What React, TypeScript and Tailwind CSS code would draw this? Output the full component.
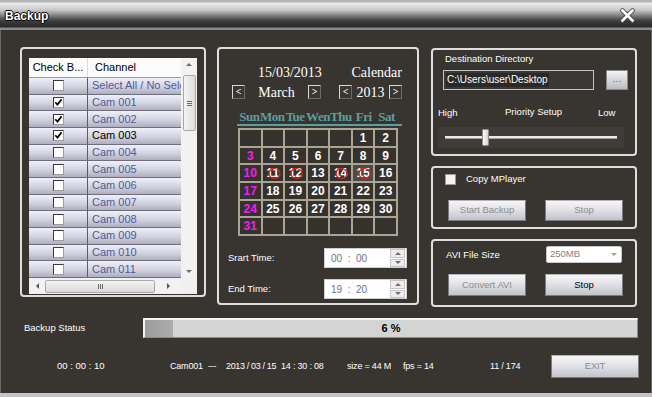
import React from "react";

const SANS = "font-['Liberation_Sans',Arial,sans-serif]";
const SERIF = "font-['Liberation_Serif','Times_New_Roman',serif]";

const channels = [
	"Select All / No Select",
	"Cam 001",
	"Cam 002",
	"Cam 003",
	"Cam 004",
	"Cam 005",
	"Cam 006",
	"Cam 007",
	"Cam 008",
	"Cam 009",
	"Cam 010",
	"Cam 011",
];
const checkedRows = [1, 2, 3];

const weeks = [
	[0, 0, 0, 0, 0, 1, 2],
	[3, 4, 5, 6, 7, 8, 9],
	[10, 11, 12, 13, 14, 15, 16],
	[17, 18, 19, 20, 21, 22, 23],
	[24, 25, 26, 27, 28, 29, 30],
	[31, 0, 0, 0, 0, 0, 0],
];
const marked = [11, 12, 14, 15];
const dayNames = ["Sun", "Mon", "Tue", "Wen", "Thu", "Fri", "Sat"];

const Check = ({ on }: { on?: boolean }) => (
	<div className="w-[11px] h-[11px] bg-white border border-[#3a3a3a] border-r-[#9c9c9c] border-b-[#9c9c9c] flex items-center justify-center">
		{on && (
			<svg width="9" height="9" viewBox="0 0 9 9">
				<path d="M1.3 4.2 L3.4 6.6 L7.6 1.4" stroke="#000" strokeWidth="1.7" fill="none" />
			</svg>
		)}
	</div>
);

const TriUp = () => (
	<div className="w-0 h-0 border-l-[3px] border-r-[3px] border-b-[3px] border-l-transparent border-r-transparent border-b-[#6e6e6e]" />
);
const TriDown = () => (
	<div className="w-0 h-0 border-l-[3px] border-r-[3px] border-t-[3px] border-l-transparent border-r-transparent border-t-[#6e6e6e]" />
);

const Btn = ({ children, w, h, dark }: { children: React.ReactNode; w: string; h: string; dark?: boolean }) => (
	<div
		className={`${w} ${h} flex items-center justify-center border border-[#7c7c80] border-t-[#b4b4b8] bg-[linear-gradient(to_bottom,#f6f6f8,#e2e2e8_45%,#c2c2ca)] text-[9.5px] ${SANS} ${
			dark ? "text-black" : "text-[#8c8c8c]"
		}`}
	>
		{children}
	</div>
);

const NavBtn = ({ dir }: { dir: string }) => (
	<div className="w-[13px] h-[14px] flex items-center justify-center border border-[#d8d8d8] border-r-[#6a6a6a] border-b-[#6a6a6a] bg-[#3a3632] text-white text-[10px] font-bold leading-none">
		{dir}
	</div>
);

const TimeBox = ({ value }: { value: string }) => (
	<div className="w-[83px] h-[20px] bg-white border border-[#cfcfcf] flex items-center">
		<span className={`ml-[6px] flex-1 text-[10px] text-[#70708c] whitespace-pre ${SANS}`}>{value}</span>
		<div className="w-[15px] h-[18px] mr-[1px] flex flex-col gap-[1px]">
			<div className="flex-1 bg-[#ededed] border border-[#c6c6c6] flex items-center justify-center">
				<TriUp />
			</div>
			<div className="flex-1 bg-[#ededed] border border-[#c6c6c6] flex items-center justify-center">
				<TriDown />
			</div>
		</div>
	</div>
);

const ChannelList = () => (
	<div className="w-[168px] h-[236px] bg-[#f0f0f0] flex flex-col ml-[7px] mt-[9px]">
		<div className="flex h-[220px]">
			<div className="w-[152px] flex flex-col">
				<div className="h-[20px] shrink-0 flex bg-[#fbfbfb] border-b border-[#9a9aa4] text-[11px] text-black">
					<div className="w-[59px] flex items-center justify-center border-r border-[#dcdcdc]">Check B...</div>
					<div className="flex-1 flex items-center pl-[7px]">Channel</div>
				</div>
				<div className="h-[200px] grid grid-rows-[repeat(12,minmax(0,1fr))]">
					{channels.map((name, i) => (
						<div
							key={name}
							className="min-h-0 overflow-hidden flex bg-[linear-gradient(to_bottom,#f0f0fa,#d2d2e0_55%,#aeaebe)] border-b border-[#6e6e7c]"
						>
							<div className="w-[59px] flex items-center justify-center border-r border-[#5c5c68]">
								<Check on={checkedRows.includes(i)} />
							</div>
							<div
								className={`flex-1 flex items-center pl-[4px] overflow-hidden whitespace-nowrap text-[11px] leading-[13px] ${
									i === 3 ? "text-black" : "text-[#4c5c9c]"
								}`}
							>
								{name}
							</div>
						</div>
					))}
				</div>
			</div>
			<div className="w-[16px] flex flex-col items-center bg-[#f2f2f2]">
				<div className="h-[13px] flex items-center">
					<TriUp />
				</div>
				<div className="w-[13px] h-[56px] mt-[4px] rounded-[2px] border border-[#a8a8a8] bg-[linear-gradient(to_right,#f4f4f4,#dcdcdc)] flex flex-col items-center justify-center gap-[1px]">
					<div className="w-[5px] h-px bg-[#6a6a6a]" />
					<div className="w-[5px] h-px bg-[#6a6a6a]" />
					<div className="w-[5px] h-px bg-[#6a6a6a]" />
				</div>
				<div className="flex-1" />
				<div className="h-[13px] flex items-center">
					<TriDown />
				</div>
			</div>
		</div>
		<div className="h-[16px] flex items-center">
			<div className="w-[152px] h-[14px] flex items-center bg-[#f2f2f2]">
				<div className="w-[16px] flex justify-center">
					<div className="w-0 h-0 border-t-[3px] border-b-[3px] border-r-[3px] border-t-transparent border-b-transparent border-r-[#555]" />
				</div>
				<div className="w-[110px] h-[13px] rounded-[2px] border border-[#a8a8a8] bg-[linear-gradient(to_bottom,#f6f6f6,#d8d8d8)] flex items-center justify-center gap-[1px]">
					<div className="w-px h-[5px] bg-[#6a6a6a]" />
					<div className="w-px h-[5px] bg-[#6a6a6a]" />
					<div className="w-px h-[5px] bg-[#6a6a6a]" />
				</div>
				<div className="flex-1 flex justify-center">
					<div className="w-0 h-0 border-t-[3px] border-b-[3px] border-l-[3px] border-t-transparent border-b-transparent border-l-[#555]" />
				</div>
			</div>
		</div>
	</div>
);

const Calendar = () => (
	<div className="w-[202px] h-[258px] border-2 border-[#dedede] rounded-[4px] ml-[11px] flex flex-col">
		<div className={`h-[16px] mt-[15px] flex items-center text-white text-[14px] ${SERIF}`}>
			<span className="ml-[39px]">15/03/2013</span>
			<span className="ml-auto mr-[15px]">Calendar</span>
		</div>
		<div className={`h-[14px] mt-[5px] flex items-center text-white text-[14px] ${SERIF}`}>
			<div className="ml-[13px]">
				<NavBtn dir="<" />
			</div>
			<div className="w-[63px] text-center">March</div>
			<NavBtn dir=">" />
			<div className="w-[18px]" />
			<NavBtn dir="<" />
			<div className="w-[37px] text-center">2013</div>
			<NavBtn dir=">" />
		</div>
		<div className={`w-[160px] h-[14px] ml-[19px] mt-[11px] grid grid-cols-7 text-[13px] font-bold text-[#5f9ea0] leading-[14px] ${SERIF}`}>
			{dayNames.map((d) => (
				<div key={d} className="flex justify-center whitespace-nowrap tracking-[-0.5px]">
					{d}
				</div>
			))}
		</div>
		<div className="w-[165px] h-[2px] ml-[18px] bg-[#5f9ea0]" />
		<div className={`w-[160px] h-[108px] ml-[19px] mt-[2px] grid grid-cols-7 grid-rows-6 gap-[2px] p-[2px] bg-[#a9a592] ${SANS}`}>
			{weeks.flat().map((d, i) => (
				<div
					key={i}
					className={`relative flex items-center justify-center text-[12px] font-bold ${
						d === 15 ? "bg-[#4e4a46]" : "bg-[#35312d]"
					} ${i % 7 === 0 ? "text-[#f020f0]" : "text-white"}`}
				>
					{d > 0 ? d : ""}
					{marked.includes(d) && (
						<svg className="absolute left-[4px] top-[1px]" width="14" height="14" viewBox="0 0 14 14">
							<ellipse cx="7.5" cy="7.5" rx="5.5" ry="5" stroke="#e02222" strokeWidth="1.2" fill="none" />
							<path d="M3 3 L8 2" stroke="#e02222" strokeWidth="1.2" />
						</svg>
					)}
				</div>
			))}
		</div>
		<div className={`h-[20px] mt-[12px] flex items-center justify-between pl-[9px] pr-[10px] text-white text-[9.5px] ${SANS}`}>
			<span>Srart Time:</span>
			<TimeBox value="00  :  00" />
		</div>
		<div className={`h-[20px] mt-[11px] flex items-center justify-between pl-[9px] pr-[10px] text-white text-[9.5px] ${SANS}`}>
			<span>End Time:</span>
			<TimeBox value="19  :  20" />
		</div>
	</div>
);

const RightColumn = () => (
	<div className={`w-[206px] ml-[12px] mt-[1px] flex flex-col gap-[10px] text-white text-[9.5px] ${SANS}`}>
		<div className="h-[108px] border-2 border-[#dedede] rounded-[4px] flex flex-col">
			<div className="h-[12px] mt-[3px] pl-[12px] leading-[12px]">Destination Directory</div>
			<div className="h-[20px] mt-[5px] flex items-center">
				<div className="ml-[10px] w-[151px] h-[20px] bg-[#3b3936] border border-[#c4c4c4] flex items-center pl-[2px]">
					<span className="bg-[#2a2927] px-px leading-[14px] text-[10px]">C:\Users\user\Desktop</span>
				</div>
				<div className="ml-[12px] w-[22px] h-[20px] border border-[#8a8a8e] bg-[linear-gradient(to_bottom,#f4f4f6,#d6d6dc_50%,#babac2)] flex items-center justify-center text-[#707070] text-[10px] leading-none pb-[3px]">
					...
				</div>
			</div>
			<div className="h-[12px] mt-[17px] flex items-center pl-[5px] leading-[12px]">
				<span className="w-[67px]">High</span>
				<span className="w-[93px] -mt-[2px]">Priority Setup</span>
				<span>Low</span>
			</div>
			<div className="ml-[5px] mt-[8px] w-[186px] h-[21px] bg-[#403c38] relative flex items-center px-[7px]">
				<div className="w-full h-[3px] bg-[#e8e8e8] border-b border-[#a0a0a0]" />
				<div className="absolute left-[44px] top-[2px] w-[7px] h-[17px] rounded-[1px] border border-[#8c8c8c] bg-[linear-gradient(to_right,#fafafa,#d4d4d4)]" />
			</div>
		</div>
		<div className="h-[63px] border-2 border-[#dedede] rounded-[4px] flex flex-col">
			<div className="h-[11px] mt-[6px] flex items-center pl-[12px]">
				<div className="w-[11px] h-[11px] bg-[#f4f4f4] border border-[#9a9a9a]" />
				<span className="ml-[10px] -mt-[1px]">Copy MPlayer</span>
			</div>
			<div className="mt-[15px] flex pl-[15px] gap-[19px]">
				<Btn w="w-[78px]" h="h-[21px]">
					Start Backup
				</Btn>
				<Btn w="w-[78px]" h="h-[21px]">
					Stop
				</Btn>
			</div>
		</div>
		<div className="h-[68px] border-2 border-[#dedede] rounded-[4px] flex flex-col">
			<div className="h-[17px] mt-[5px] flex items-center pl-[13px]">
				<span className="w-[100px] mt-[2px]">AVI File Size</span>
				<div className="w-[76px] h-[17px] bg-white border border-[#c8c8c8] rounded-[2px] flex items-center pl-[3px] pr-[4px] text-[#808080]">
					<span className="flex-1">250MB</span>
					<div className="w-0 h-0 border-l-[3px] border-r-[3px] border-t-[3px] border-l-transparent border-r-transparent border-t-[#a0a0a0]" />
				</div>
			</div>
			<div className="mt-[11px] flex pl-[15px] gap-[19px]">
				<Btn w="w-[78px]" h="h-[22px]">
					Convert AVI
				</Btn>
				<Btn w="w-[78px]" h="h-[22px]" dark>
					Stop
				</Btn>
			</div>
		</div>
	</div>
);

export default function App() {
	return (
		<div className={`w-[652px] h-[397px] overflow-hidden bg-[#c4c4c4] ${SANS}`}>
			<div className="h-[30px] relative bg-[linear-gradient(to_bottom,#b4b4b4_0px,#b4b4b4_2px,#ececec_3px,#c8c8c8_10px,#7a7a7a_16px,#3c3c3c_21px,#2a2a2a_27px,#8a8a8a_28px,#8a8a8a_30px)]">
				<span className="absolute left-[5px] top-[7px] text-[12px] font-bold text-white [text-shadow:1px_0_0_#000,-1px_0_0_#000,0_1px_0_#000,0_-1px_0_#000]">
					Backup
				</span>
				<svg className="absolute left-[620px] top-[8px]" width="15" height="15" viewBox="0 0 15 15">
					<path d="M2.5 2.5 L12.5 12.5 M12.5 2.5 L2.5 12.5" stroke="#333" strokeWidth="4.2" strokeLinecap="square" />
					<path d="M2.5 2.5 L12.5 12.5 M12.5 2.5 L2.5 12.5" stroke="#fff" strokeWidth="2.8" strokeLinecap="square" />
				</svg>
			</div>
			<div className="h-[363px] bg-[#38342f] border-l border-r border-[#6a6660] flex flex-col">
				<div className="h-[277px] pt-[17px] pl-[19px] flex items-start">
					<div className="w-[186px] h-[250px] border-2 border-[#dedede] rounded-[4px]">
						<ChannelList />
					</div>
					<Calendar />
					<RightColumn />
				</div>
				<div className="h-[20px] mt-[11px] flex items-center text-white text-[9.5px]">
					<span className="pl-[23px] w-[142px]">Backup Status</span>
					<div className="relative w-[495px] h-[20px] bg-[#d4d4d4] border-t-2 border-l-2 border-[#f4f4f4] border-b border-r border-b-[#8a8a8a] border-r-[#8a8a8a] flex">
						<div className="w-[28px] h-full bg-[linear-gradient(to_right,#9c9c9c,#acacac)]" />
						<span className="absolute inset-0 flex items-center justify-center text-black font-bold text-[11px]">6 %</span>
					</div>
				</div>
				<div className="h-[23px] mt-[17px] flex items-center text-white text-[9px] tracking-[-0.2px] whitespace-pre">
					<span className="pl-[56px] w-[169px] text-[9.5px] tracking-normal">00 : 00 : 10</span>
					<span className="w-[38px]">Cam001</span>
					<span className="w-[18px]">---</span>
					<span className="w-[55px] tracking-[-0.35px]">2013 / 03 / 15</span>
					<span className="w-[66px]">14 : 30 : 08</span>
					<span className="w-[56px]">size = 44 M</span>
					<span className="w-[87px]">fps = 14</span>
					<span className="w-[61px]">11 / 174</span>
					<Btn w="w-[88px]" h="h-[23px]">
						EXIT
					</Btn>
				</div>
			</div>
		</div>
	);
}
